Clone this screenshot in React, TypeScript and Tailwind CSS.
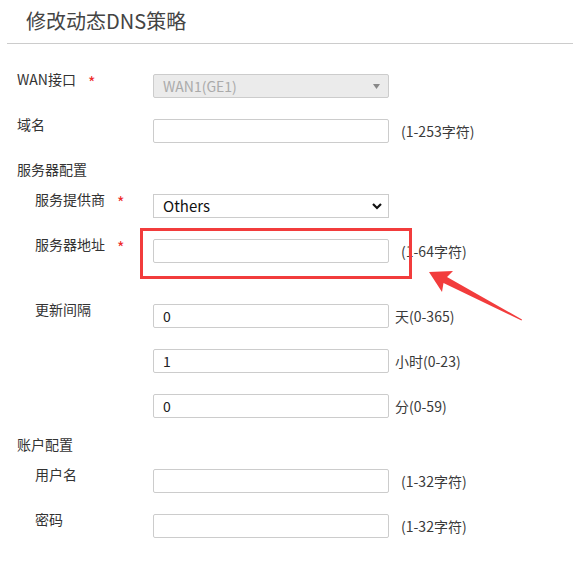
const font = { fontFamily: '"Microsoft YaHei", "Noto Sans CJK SC", "Noto Sans", sans-serif' }

function Label({ text, required, nested }: { text: string; required?: boolean; nested?: boolean }) {
  return (
    <div className={`w-[146px] shrink-0 flex items-start leading-[11px] text-[14px] text-[#333] ${nested ? 'pl-[28px]' : 'pl-[10px]'}`}>
      <span>{text}</span>
      {required && <span className="ml-[12px] text-[#ee2a2a] text-[16px] leading-[16px]">*</span>}
    </div>
  )
}

function TextInput({ value = '' }: { value?: string }) {
  return (
    <input
      readOnly
      value={value}
      className="w-[236px] h-[24px] shrink-0 border border-[#cccccc] rounded-[2px] bg-white pl-[9px] text-[14px] text-[#222] outline-none"
    />
  )
}

function Hint({ text, tight }: { text: string; tight?: boolean }) {
  return <span className={`text-[14px] leading-[24px] text-[#3a3a3a] ${tight ? 'ml-[6px]' : 'ml-[12px]'}`}>{text}</span>
}

export default function App() {
  return (
    <div className="w-[580px] h-[575px] bg-white px-[7px] relative overflow-hidden" style={font}>
      {/* header */}
      <div className="h-[44px] border-b border-[#cccccc] pl-[19px] pt-[9px]">
        <h1 className="text-[20px] leading-[24px] text-[#444]">修改动态DNS策略</h1>
      </div>

      <div className="pt-[30px]">
        <div className="flex items-start h-[24px] mb-[21px]">
          <Label text="WAN接口" required />
          <div className="w-[236px] h-[24px] border border-[#cccccc] rounded-[2px] bg-[#ebebeb] flex items-center justify-between pl-[9px] pr-[8px]">
            <span className="text-[14px] text-[#aaaaaa]">WAN1(GE1)</span>
            <svg width="7" height="5" viewBox="0 0 7 5"><path d="M0 0 L7 0 L3.5 5 Z" fill="#888" /></svg>
          </div>
        </div>

        <div className="flex items-start h-[24px] mb-[21px]">
          <Label text="域名" />
          <TextInput />
          <Hint text="(1-253字符)" />
        </div>

        <div className="h-[30px] pl-[10px] text-[14px] leading-[11px] text-[#333]">服务器配置</div>

        <div className="flex items-start h-[24px] mb-[21px]">
          <Label text="服务提供商" required nested />
          <div className="w-[236px] h-[24px] border border-[#cccccc] bg-white flex items-center justify-between pl-[9px] pr-[6px]">
            <span className="text-[15px] text-[#111]">Others</span>
            <svg width="10" height="7" viewBox="0 0 10 7"><path d="M1 1 L5 5 L9 1" fill="none" stroke="#111" strokeWidth="2.2" /></svg>
          </div>
        </div>

        <div className="flex items-start h-[24px] mb-[41px] relative">
          <Label text="服务器地址" required nested />
          <TextInput />
          <Hint text="(1-64字符)" />
          <div className="absolute left-[133px] top-[-11px] w-[272px] h-[51px] border-[3px] border-[#f23c3c]" />
        </div>

        <div className="flex items-start h-[24px] mb-[21px]">
          <Label text="更新间隔" nested />
          <TextInput value="0" />
          <Hint text="天(0-365)" tight />
        </div>

        <div className="flex items-start h-[24px] mb-[21px]">
          <Label text="" nested />
          <TextInput value="1" />
          <Hint text="小时(0-23)" tight />
        </div>

        <div className="flex items-start h-[24px] mb-[21px]">
          <Label text="" nested />
          <TextInput value="0" />
          <Hint text="分(0-59)" tight />
        </div>

        <div className="h-[30px] pl-[10px] text-[14px] leading-[11px] text-[#333]">账户配置</div>

        <div className="flex items-start h-[24px] mb-[21px]">
          <Label text="用户名" nested />
          <TextInput />
          <Hint text="(1-32字符)" />
        </div>

        <div className="flex items-start h-[24px]">
          <Label text="密码" nested />
          <TextInput />
          <Hint text="(1-32字符)" />
        </div>
      </div>

      {/* annotation arrow */}
      <svg className="absolute left-0 top-0 pointer-events-none" width="580" height="575" viewBox="0 0 580 575">
        <polygon
          points="429,272 453,271 447,277 522,319.5 521.5,320.5 443.5,283 442,292"
          fill="#f23c3c"
        />
      </svg>
    </div>
  )
}
